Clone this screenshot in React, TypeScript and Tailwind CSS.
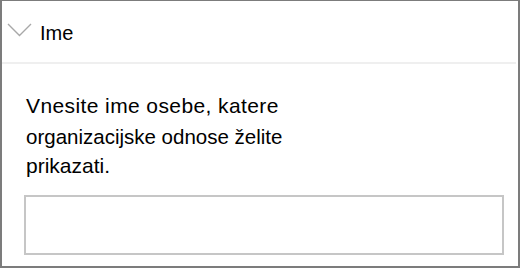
export default function App() {
  return (
    <div
      className="w-[520px] h-[268px] bg-white border-x-2 border-t border-b-2 border-[#7c7c7c] flex flex-col"
      style={{ fontFamily: '"Liberation Sans", Arial, sans-serif' }}
    >
      {/* Section header */}
      <div className="h-[61px] flex items-center pl-[5px] gap-[7px] shrink-0">
        <svg width="26" height="14" viewBox="0 0 26 14" className="-mt-[4px]">
          <polyline points="1,1 12.5,12.5 24,1" fill="none" stroke="#a8a8a8" strokeWidth="1.4" />
        </svg>
        <span className="text-[20px] text-black leading-none mt-[2px]">Ime</span>
      </div>
      <div className="h-[2px] bg-[#efefef] mr-[2px] shrink-0" />

      {/* Body */}
      <div className="pl-[22px] pt-[26px] text-black">
        <div className="pl-[2px]">
          <p className="text-[21px] leading-[32px] tracking-[0.4px]">Vnesite ime osebe, katere</p>
          <p className="text-[20.5px] leading-[30px]">organizacijske odnose želite</p>
          <p className="text-[21px] leading-[28px]">prikazati.</p>
        </div>
        <div className="mt-[15px] w-[480px] h-[60px] border-2 border-[#c6c6c6] bg-white" />
      </div>
    </div>
  );
}
